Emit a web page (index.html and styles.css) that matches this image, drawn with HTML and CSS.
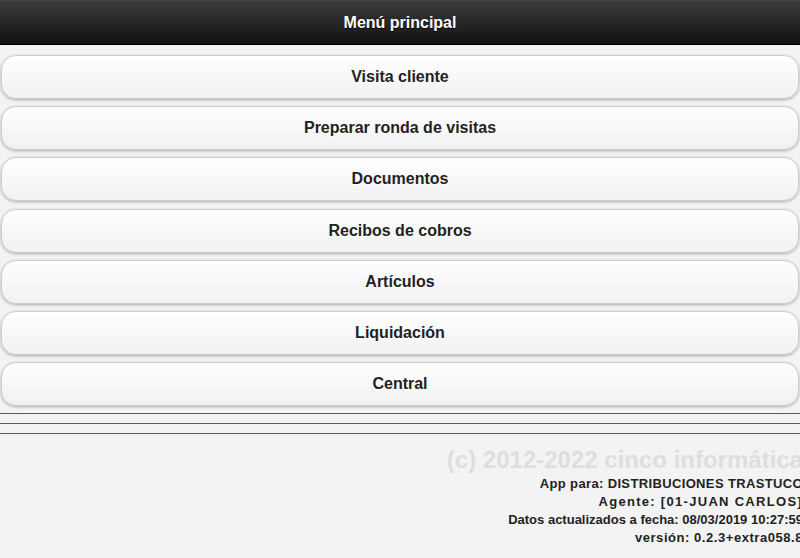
FILE: index.html
```html
<!DOCTYPE html>
<html lang="es">
<head>
<meta charset="utf-8">
<title>Menú principal</title>
<link rel="stylesheet" href="styles.css">
</head>
<body>
<div class="page">
  <header class="bar">
    <h1 class="bar-title">Menú principal</h1>
  </header>
  <main class="content">
    <nav class="menu">
      <a class="btn" href="#">Visita cliente</a>
      <a class="btn" href="#">Preparar ronda de visitas</a>
      <a class="btn" href="#">Documentos</a>
      <a class="btn" href="#">Recibos de cobros</a>
      <a class="btn" href="#">Artículos</a>
      <a class="btn" href="#">Liquidación</a>
      <a class="btn" href="#">Central</a>
    </nav>
    <div class="rules">
      <div class="rule"></div>
      <div class="rule"></div>
      <div class="rule"></div>
    </div>
    <footer class="info">
      <div class="copy">(c) 2012-2022 cinco informática</div>
      <div class="line line-app">App para: DISTRIBUCIONES TRASTUCO</div>
      <div class="line line-agent">Agente: [01-JUAN CARLOS]</div>
      <div class="line">Datos actualizados a fecha: 08/03/2019 10:27:59</div>
      <div class="line line-version">versión: 0.2.3+extra058.8</div>
    </footer>
  </main>
</div>
</body>
</html>
```
FILE: styles.css
```css
html, body {
  margin: 0;
  padding: 0;
  height: 100%;
  overflow: hidden;
}
body {
  background: #f3f3f3;
  font-family: "Liberation Sans", Arial, sans-serif;
  color: #222;
}
.page {
  display: flex;
  flex-direction: column;
}
.bar {
  height: 45px;
  box-sizing: border-box;
  background: linear-gradient(#3c3c3c, #111111);
  border-top: 1px solid #444;
  border-bottom: 1px solid #000;
  display: flex;
  align-items: center;
  justify-content: center;
}
.bar-title {
  margin: 0;
  font-size: 16px;
  font-weight: bold;
  color: #fff;
  text-shadow: 0 1px 0 #000;
  line-height: 20px;
}
.content {
  padding-top: 10px;
  display: flex;
  flex-direction: column;
}
.menu {
  display: flex;
  flex-direction: column;
  gap: 7.2px;
  padding: 0 1px 0 1px;
}
.btn {
  display: block;
  height: 44px;
  box-sizing: border-box;
  padding: 11px 20px;
  line-height: 20px;
  border: 1px solid #cccccc;
  border-radius: 15px;
  background: linear-gradient(#ffffff, #f1f1f1);
  box-shadow: 0 1px 3px rgba(0, 0, 0, 0.3);
  text-align: center;
  text-decoration: none;
  color: #222;
  font-size: 16px;
  font-weight: bold;
  text-shadow: 0 1px 0 #fff;
}
.rules {
  margin-top: 7px;
  display: flex;
  flex-direction: column;
  gap: 9px;
}
.rule {
  border-top: 1px solid #5a5a5a;
}
.info {
  margin-right: -3px;
  text-align: right;
  font-weight: bold;
}
.copy {
  margin-top: 11px;
  font-size: 24px;
  line-height: 30px;
  color: #dedede;
}
.line {
  font-size: 13px;
  line-height: 18px;
  color: #222;
}
.line-app {
  letter-spacing: 0.36px;
}
.line-agent {
  letter-spacing: 1.3px;
}
.line-version {
  letter-spacing: 0.55px;
}
```
